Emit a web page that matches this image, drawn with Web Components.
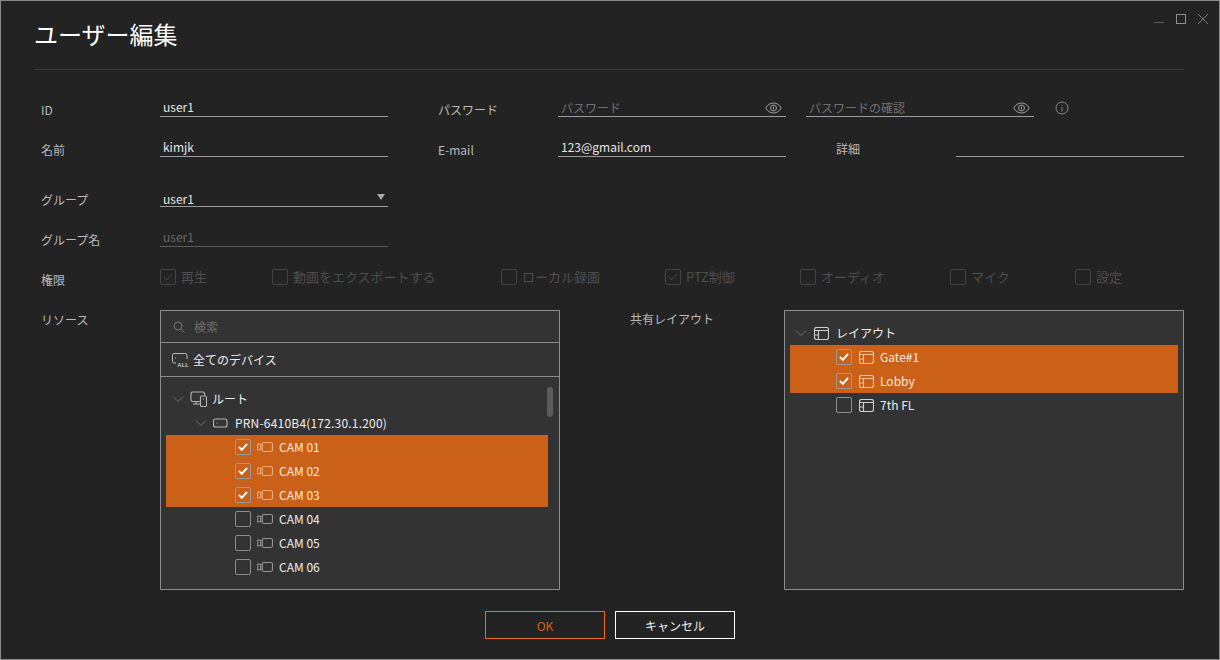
<!DOCTYPE html>
<html lang="ja">
<head>
<meta charset="utf-8">
<title>ユーザー編集</title>
<style>
  html, body { margin: 0; padding: 0; background: #232323; }
</style>
</head>
<body>
<user-dialog></user-dialog>

<script>
(function() {
  const FONT = '"Noto Sans CJK JP", "Noto Sans", sans-serif';

  const ICONS = {
    chevron: '<svg width="12" height="12" viewBox="0 0 12 12" fill="none" stroke="#6f6f6f"><path d="M1 3.5 6 8.5 11 3.5"/></svg>',
    cam: '<svg width="16" height="12" viewBox="0 0 16 12" fill="none" stroke="currentColor" stroke-width="1.100"><rect x="5.300" y="1.500" width="10.200" height="9" rx="1.800"/><path d="M5.300 3.500H3.600V8.500H5.300"/><path d="M3.600 3H.7V9H3.600"/></svg>',
    layout: '<svg width="15" height="13" viewBox="0 0 15 13" fill="none" stroke="currentColor" stroke-width="1.100"><rect x=".5" y=".5" width="14" height="12" rx="2"/><path d="M.5 3.500H14.500M4.500 3.500V12.500M.5 8H4.500"/></svg>',
    root: '<svg width="18" height="16" viewBox="0 0 18 16" fill="none" stroke="#b5b5b5" stroke-width="1.100"><path d="M10 10.500H2.500A1.500 1.500 0 0 1 1 9V2.500A1.500 1.500 0 0 1 2.500 1H13A1.500 1.500 0 0 1 14.500 2.500V4.500"/><path d="M3 13H10M6 10.500V13"/><rect x="10.500" y="5" width="6" height="10.500" rx="1.200"/><path d="M13.500 7.500V8.500"/></svg>',
    nvr: '<svg width="15" height="10" viewBox="0 0 15 10" fill="none" stroke="#b5b5b5" stroke-width="1.100"><rect x=".5" y="1" width="13.500" height="8" rx="2"/><path d="M3.500 5H4.500"/></svg>',
    all: '<svg width="16" height="12" viewBox="0 0 16 12" fill="none" stroke="#b5b5b5" stroke-width="1"><path d="M7 10H2A1.500 1.500 0 0 1 .5 8.500V2A1.500 1.500 0 0 1 2 .5H13.500A1.500 1.500 0 0 1 15 2V6"/><path d="M3 5H4"/></svg>',
    search: '<svg width="12" height="12" viewBox="0 0 12 12" fill="none" stroke="#777" stroke-width="1"><circle cx="5" cy="5" r="4"/><path d="M8 8 11.500 11.500"/></svg>',
    eye: '<svg width="17" height="12" viewBox="0 0 17 12" fill="none" stroke="#a0a0a0" stroke-width="1"><path d="M.7 6C2.500 3 5 1 8.500 1S14.500 3 16.300 6C14.500 9 12 11 8.500 11S2.500 9 .7 6Z"/><circle cx="8.500" cy="6" r="3"/><path d="M8.500 4.500V7.500"/></svg>',
    info: '<svg width="14" height="14" viewBox="0 0 14 14" fill="none" stroke="#8a8a8a" stroke-width="1"><circle cx="7" cy="7" r="6"/><path d="M7 6V10.500M7 3.700V4.800"/></svg>'
  };

  // underlined value / placeholder field
  class TextField extends HTMLElement {
    constructor() {
      super();
      const root = this.attachShadow({ mode: 'open' });
      root.innerHTML = `
        <style>
          :host {
            display: flex;
            align-items: center;
            height: 24px;
            box-sizing: border-box;
            padding: 4px 4px 0 3px;
            border-bottom: 1px solid #9c9c9c;
            font-size: 12px;
            color: #e4e4e4;
          }
          :host([kind="ph"]) { color: #6f6f6f; padding-top: 6px; }
          :host([kind="off"]) { color: #666; border-bottom-color: #5a5a5a; }
          :host([kind="low"]) { align-items: flex-end; padding: 0 3px 0 3px; line-height: 15px; }
          span { flex: 1; white-space: nowrap; }
          ::slotted(svg) { display: block; }
        </style>
        <span id="v"></span><slot></slot>`;
    }
    connectedCallback() {
      this.shadowRoot.getElementById('v').textContent = this.getAttribute('value') || '';
    }
  }

  class FormLabel extends HTMLElement {
    constructor() {
      super();
      const root = this.attachShadow({ mode: 'open' });
      root.innerHTML = `
        <style>
          :host {
            display: block;
            font-size: 12px;
            line-height: 18px;
            color: #b9b9b9;
            white-space: nowrap;
          }
        </style>
        <slot></slot>`;
    }
  }

  class CheckMark extends HTMLElement {
    constructor() {
      super();
      const root = this.attachShadow({ mode: 'open' });
      root.innerHTML = `
        <style>
          :host {
            display: block;
            flex: none;
            width: 16px;
            height: 16px;
            box-sizing: border-box;
            border: 1px solid #8e8e8e;
            border-radius: 2px;
          }
          :host([selected]) { border-color: #9a9a9a; }
          :host([disabled]) { border-color: #444; }
          svg { display: none; width: 14px; height: 14px; }
          :host([checked]) svg { display: block; }
          path { stroke: #fff; stroke-width: 2; fill: none; }
          :host([disabled]) path { stroke: #4c4c4c; stroke-width: 1; }
        </style>
        <svg viewBox="0 0 14 14"><path d="M3 7 5.800 9.800 11 4"/></svg>`;
    }
  }

  class PermCheck extends HTMLElement {
    constructor() {
      super();
      const root = this.attachShadow({ mode: 'open' });
      root.innerHTML = `
        <style>
          :host {
            display: flex;
            align-items: center;
            gap: 5px;
            font-size: 13px;
            color: #4d4d4d;
            white-space: nowrap;
          }
          slot { display: block; margin-top: -1px; }
        </style>
        <check-mark disabled></check-mark><slot></slot>`;
    }
    connectedCallback() {
      if (this.hasAttribute('checked')) {
        this.shadowRoot.querySelector('check-mark').setAttribute('checked', '');
      }
    }
  }

  // one row of a resource tree: indent, optional chevron/checkbox, icon, name
  class TreeRow extends HTMLElement {
    constructor() {
      super();
      const root = this.attachShadow({ mode: 'open' });
      root.innerHTML = `
        <style>
          :host {
            display: flex;
            align-items: center;
            height: 24px;
            font-size: 12px;
            color: #ededed;
            white-space: nowrap;
          }
          :host([selected]) { background: #cb6119; color: #fbeadd; }
          .icon { display: flex; color: #949494; }
          :host([selected]) .icon { color: #e8aa80; }
          :host([icon="layout"]) .icon { color: #cfcfcf; }
          :host([selected][icon="layout"]) .icon { color: #f2c4a2; }
          .chev { display: flex; }
          check-mark { margin-right: 6px; }
          :host([icon="layout"]) check-mark { margin-right: 7px; }
          slot { display: block; margin-top: -2px; }
          svg { display: block; }
        </style>
        <span id="lead"></span><span class="icon" id="icon"></span><slot></slot>`;
    }
    connectedCallback() {
      const lead = this.shadowRoot.getElementById('lead');
      lead.style.cssText = 'display:flex;align-items:center;padding-left:' + (this.getAttribute('indent') || 0) + 'px';
      if (this.hasAttribute('open')) {
        lead.innerHTML = '<span class="chev" style="margin-right:' + (this.getAttribute('lead-gap') || 6) + 'px">' + ICONS.chevron + '</span>';
      } else {
        const box = document.createElement('check-mark');
        if (this.hasAttribute('checked')) box.setAttribute('checked', '');
        if (this.hasAttribute('selected')) box.setAttribute('selected', '');
        lead.appendChild(box);
      }
      const icon = this.shadowRoot.getElementById('icon');
      icon.innerHTML = ICONS[this.getAttribute('icon')];
      icon.style.marginRight = (this.getAttribute('icon-gap') || 6) + 'px';
    }
  }

  class ResourcePanel extends HTMLElement {
    constructor() {
      super();
      const root = this.attachShadow({ mode: 'open' });
      root.innerHTML = `
        <style>
          :host {
            display: block;
            width: 400px;
            height: 280px;
            box-sizing: border-box;
            border: 1px solid #8c8c8c;
            background: #333;
          }
        </style>
        <slot></slot>`;
    }
  }

  class ActionButton extends HTMLElement {
    constructor() {
      super();
      const root = this.attachShadow({ mode: 'open' });
      root.innerHTML = `
        <style>
          :host {
            display: flex;
            align-items: center;
            justify-content: center;
            width: 120px;
            height: 28px;
            box-sizing: border-box;
            border: 1px solid #fff;
            font-size: 12px;
            color: #ececec;
          }
          :host([primary]) { border-color: #f06c1f; color: #d9621a; }
        </style>
        <slot></slot>`;
    }
  }

  class WinControls extends HTMLElement {
    constructor() {
      super();
      const root = this.attachShadow({ mode: 'open' });
      root.innerHTML = `
        <style>
          :host { display: flex; gap: 12px; align-items: flex-start; }
          svg { display: block; }
        </style>
        <svg width="10" height="10" viewBox="0 0 10 10" stroke="#5f5f5f"><path d="M0 8.500H10"/></svg>
        <svg width="10" height="10" viewBox="0 0 10 10" fill="none" stroke="#8f8f8f"><rect x=".5" y=".5" width="9" height="9"/></svg>
        <svg width="10" height="10" viewBox="0 0 10 10" stroke="#7c7c7c"><path d="M0 0 10 10M10 0 0 10"/></svg>`;
    }
  }

  const template = document.createElement('template');
  template.innerHTML = `
    <style>
      :host {
        display: flex;
        flex-direction: column;
        width: 1220px;
        height: 660px;
        box-sizing: border-box;
        border: 1px solid #8b8b8b;
        background: #232323;
        font-family: ${FONT};
      }
      .top { display: flex; height: 68px; padding: 0 11px 0 33px; box-sizing: border-box; border-bottom: 0; }
      h1 { margin: 18px 0 0; font-size: 24px; font-weight: 400; line-height: 30px; color: #fff; }
      win-controls { margin: 13px 0 0 auto; }
      hr { margin: 0 35px 0 34px; border: 0; border-top: 1px solid #3a3a3a; height: 0; }
      .form {
        display: grid;
        grid-template-columns: 119px 228px 50px 120px 228px 20px 30px 120px 78px 150px;
        grid-template-rows: 24px 24px 24px 24px;
        row-gap: 16px;
        margin: 23px 0 0 40px;
      }
      .form form-label { padding-top: 8px; }
      .gap-top { margin-top: 10px; }
      .info { grid-column: 10; display: flex; align-items: center; padding: 5px 0 0 21px; }
      .perms {
        display: grid;
        grid-template-columns: 119px 112px 229px 164px 135px 150px 125px auto;
        align-items: center;
        margin: 28px 0 0 40px;
        height: 18px;
      }
      .perms form-label { padding-top: 6px; }
      .res {
        display: flex;
        margin: 27px 0 0 40px;
      }
      .res > form-label { width: 119px; flex: none; padding-top: 1px; }
      .res > form-label.second { width: 154px; margin-left: 70px; padding-top: 0; }
      .search, .all { display: flex; align-items: center; box-sizing: border-box; border-bottom: 1px solid #8c8c8c; }
      .search { height: 32px; padding-left: 12px; gap: 9px; font-size: 12px; color: #6e6e6e; }
      .all { height: 34px; padding-left: 11px; gap: 5px; font-size: 12px; color: #ededed; }
      .all .ic { position: relative; display: flex; width: 16px; height: 14px; }
      .all small { position: absolute; right: -1px; bottom: -2px; padding-left: 1px; background: #333; font: 700 6px/7px "Liberation Sans", sans-serif; color: #c4c4c4; }
      .tree { position: relative; padding: 10px 11px 0 5px; }
      .thumb { position: absolute; left: 386px; top: 10px; width: 6px; height: 30px; border-radius: 3px; background: #5c5c5c; }
      .ltree { padding: 10px 5px 0 5px; }
      .prn { letter-spacing: .2px; }
      .buttons { display: flex; justify-content: center; gap: 10px; margin-top: 21px; }
      svg { display: block; }
    </style>

    <div class="top">
      <h1>ユーザー編集</h1>
      <win-controls></win-controls>
    </div>
    <hr>

    <div class="form">
      <form-label>ID</form-label>
      <text-field value="user1"></text-field>
      <form-label style="grid-column:4">パスワード</form-label>
      <text-field kind="ph" value="パスワード" style="grid-column:5">${ICONS.eye}</text-field>
      <text-field kind="ph" value="パスワードの確認" style="grid-column:7 / span 3">${ICONS.eye}</text-field>
      <div class="info">${ICONS.info}</div>

      <form-label>名前</form-label>
      <text-field value="kimjk"></text-field>
      <form-label style="grid-column:4">E-mail</form-label>
      <text-field value="123@gmail.com" style="grid-column:5"></text-field>
      <form-label style="grid-column:8; padding-top:7px">詳細</form-label>
      <text-field style="grid-column:9 / span 2"></text-field>

      <form-label class="gap-top">グループ</form-label>
      <text-field class="gap-top" kind="low" value="user1"><svg width="8" height="6" viewBox="0 0 8 6" style="margin:0 0 6px" fill="#a8a8a8"><path d="M0 0H8L4 6Z"/></svg></text-field>
      <span style="grid-column:3 / -1"></span>

      <form-label class="gap-top">グループ名</form-label>
      <text-field class="gap-top" kind="off" value="user1"></text-field>
    </div>

    <div class="perms">
      <form-label>権限</form-label>
      <perm-check checked>再生</perm-check>
      <perm-check>動画をエクスポートする</perm-check>
      <perm-check>ローカル録画</perm-check>
      <perm-check checked>PTZ制御</perm-check>
      <perm-check>オーディオ</perm-check>
      <perm-check>マイク</perm-check>
      <perm-check>設定</perm-check>
    </div>

    <div class="res">
      <form-label>リソース</form-label>
      <resource-panel>
        <div class="search">${ICONS.search}<span>検索</span></div>
        <div class="all"><span class="ic">${ICONS.all}<small>ALL</small></span><span>全てのデバイス</span></div>
        <div class="tree">
          <tree-row open indent="6" icon="root" lead-gap="6" icon-gap="4">ルート</tree-row>
          <tree-row open indent="29" icon="nvr" lead-gap="6" icon-gap="7"><span class="prn">PRN-6410B4(172.30.1.200)</span></tree-row>
          <tree-row selected checked indent="69" icon="cam">CAM 01</tree-row>
          <tree-row selected checked indent="69" icon="cam">CAM 02</tree-row>
          <tree-row selected checked indent="69" icon="cam">CAM 03</tree-row>
          <tree-row indent="69" icon="cam">CAM 04</tree-row>
          <tree-row indent="69" icon="cam">CAM 05</tree-row>
          <tree-row indent="69" icon="cam">CAM 06</tree-row>
          <div class="thumb"></div>
        </div>
      </resource-panel>
      <form-label class="second">共有レイアウト</form-label>
      <resource-panel>
        <div class="ltree">
          <tree-row open indent="5" icon="layout" lead-gap="7" icon-gap="7">レイアウト</tree-row>
          <tree-row selected checked indent="46" icon="layout" icon-gap="6">Gate#1</tree-row>
          <tree-row selected checked indent="46" icon="layout" icon-gap="6">Lobby</tree-row>
          <tree-row indent="46" icon="layout" icon-gap="6">7th FL</tree-row>
        </div>
      </resource-panel>
    </div>

    <div class="buttons">
      <action-button primary>OK</action-button>
      <action-button>キャンセル</action-button>
    </div>`;

  class UserDialog extends HTMLElement {
    constructor() {
      super();
      let shadowRoot = this.attachShadow({ mode: 'open' });
      shadowRoot.appendChild(template.content.cloneNode(true));
    }
  }

  window.customElements.define('text-field', TextField);
  window.customElements.define('form-label', FormLabel);
  window.customElements.define('check-mark', CheckMark);
  window.customElements.define('perm-check', PermCheck);
  window.customElements.define('tree-row', TreeRow);
  window.customElements.define('resource-panel', ResourcePanel);
  window.customElements.define('action-button', ActionButton);
  window.customElements.define('win-controls', WinControls);
  window.customElements.define('user-dialog', UserDialog);
})();
</script>
</body>
</html>
